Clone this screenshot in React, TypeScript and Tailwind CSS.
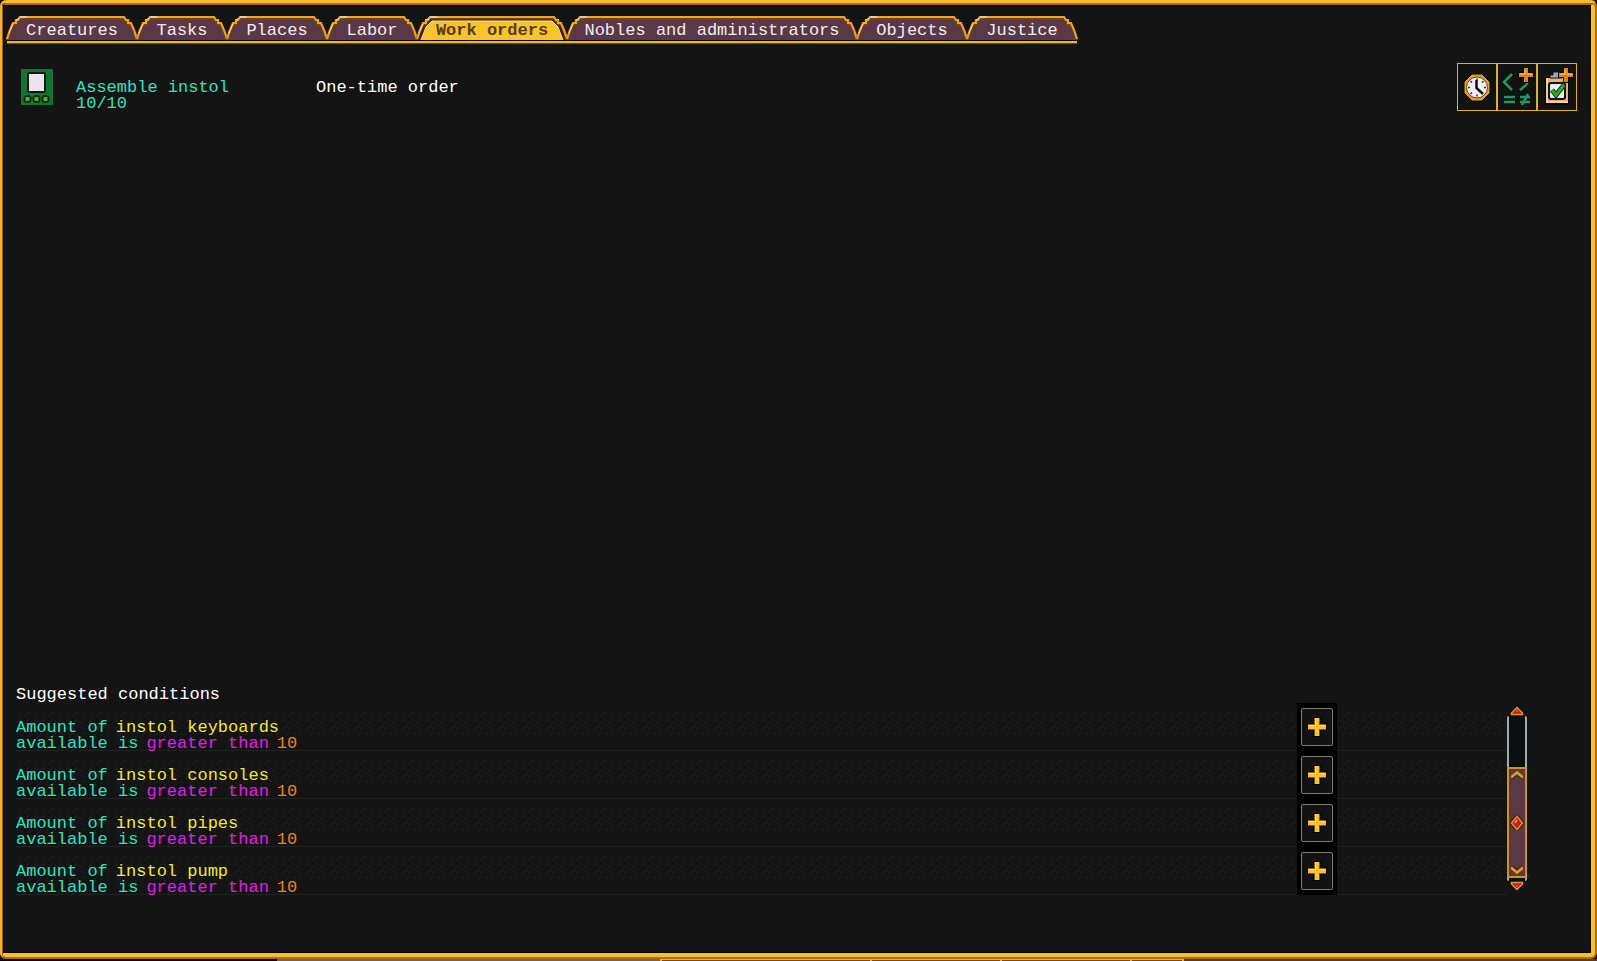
import React from "react";

type Tab = { label: string; width: string; w: number };

const TABS: Tab[] = [
  { label: "Creatures", width: "w-[130px]", w: 130 },
  { label: "Tasks", width: "w-[90px]", w: 90 },
  { label: "Places", width: "w-[100px]", w: 100 },
  { label: "Labor", width: "w-[90px]", w: 90 },
  { label: "Work orders", width: "w-[150px]", w: 150 },
  { label: "Nobles and administrators", width: "w-[290px]", w: 290 },
  { label: "Objects", width: "w-[110px]", w: 110 },
  { label: "Justice", width: "w-[110px]", w: 110 },
];

const CONDITIONS = ["instol keyboards", "instol consoles", "instol pipes", "instol pump"];

function TabShape({ w, active }: { w: number; active: boolean }) {
  const edge = `M0 23 L3 14 L6 7 H9 V4 H11 L13 1 H${w - 13} L${w - 11} 4 H${w - 9} V7 H${w - 6} L${w - 3} 14 L${w} 23`;
  const inner = `M4 24 L9 11 L12 8 L15 5 H${w - 15} L${w - 12} 8 L${w - 9} 11 L${w - 4} 24`;
  return (
    <svg aria-hidden="true" className="absolute inset-0 h-full w-full overflow-visible" viewBox={`0 0 ${w} 24`}>
      <path d={`${edge} V24 H0 Z`} fill={active ? "#3a1c08" : "#5a3848"} />
      <path d={edge} transform="translate(0 1)" fill="none" stroke="#7c4408" strokeWidth="3" />
      <path d={edge} fill="none" stroke="#e8a824" strokeWidth="2" />
      <path d="M2 17L6 8M9 4L12 2" stroke="#fce0a0" strokeWidth="1" />
      {active && <path d={`${inner} Z`} fill="#f8c42c" />}
      {active && <path d={inner} fill="none" stroke="#ffe090" strokeWidth="1" />}
      <path d="M13 1h7" stroke="#e8dcd8" strokeWidth="1.4" />
      <path d={`M0 24.500H${w}`} stroke="#0c0604" />
    </svg>
  );
}

function TabBar() {
  return (
    <nav className="flex w-fit border-b-2 border-[#f0b42c] pb-px shadow-[0_1px_0_#7c4408]">
      {TABS.map((t) => {
        const active = t.label === "Work orders";
        return (
          <button
            key={t.label}
            type="button"
            aria-pressed={active}
            className={`relative h-6 shrink-0 whitespace-nowrap ${t.width} ${active ? "font-bold text-[#5a3c08]" : "text-[#f4ecf0]"}`}
          >
            <TabShape w={t.w} active={active} />
            <span className="relative block pt-1.5 leading-4">{t.label}</span>
          </button>
        );
      })}
    </nav>
  );
}

function ConsoleIcon() {
  return (
    <svg aria-hidden="true" className="mt-1.5 h-9 w-8" viewBox="0 0 32 36">
      <rect width="32" height="36" rx="1" fill="#137434" />
      <rect x="6" y="3" width="19" height="21" rx="2" fill="#0a1c10" />
      <rect x="8" y="5" width="15" height="17" fill="#ece4ec" />
      {[6.5, 15.5, 24.5].map((x) => (
        <g key={x}>
          <circle cx={x} cy="30" r="4" fill="#0a2410" />
          <rect x={x - 2} y="28" width="4" height="4" fill="#6ca418" />
        </g>
      ))}
    </svg>
  );
}

function ClockIcon() {
  return (
    <svg aria-hidden="true" className="h-11 w-full" viewBox="0 0 38 44">
      <path d="M14 9H24L32 17V28L24 36H14L6 28V17Z" fill="#e0a028" stroke="#060606" />
      <circle cx="19" cy="22.5" r="10.500" fill="#f0ecf0" stroke="#70430c" />
      <path
        d="M19 13.500v2M19 29.500v2M10 22.500h2M26 22.500h2M12.500 16l1.500 1.500M25.500 16l-1.500 1.500M12.500 29l1.500-1.500"
        stroke="#302c34"
        strokeWidth="1.5"
      />
      <path d="M18.500 15v8l6.500 6" fill="none" stroke="#101014" strokeWidth="2.5" />
    </svg>
  );
}

function PlusMark({ x, y }: { x: number; y: number }) {
  return (
    <g transform={`translate(${x} ${y})`}>
      <path d="M5 0h4v5h5v4H9v5H5V9H0V5h5z" fill="#080604" stroke="#080604" strokeWidth="2" />
      <path d="M5 0h4v5h5v4H9v5H5V9H0V5h5z" fill="#d88420" />
      <path d="M6 1v5H1M8 6h5" fill="none" stroke="#f8cc70" />
    </g>
  );
}

function CompareIcon() {
  return (
    <svg aria-hidden="true" className="h-11 w-full" viewBox="0 0 38 44">
      <g fill="none" stroke="#06150c" strokeWidth="5">
        <path d="M14 9l-8 8 8 8M31 17l-9 8M6 32h11M6 37h11M22 32h10M22 37h10" />
      </g>
      <g fill="none" stroke="#239860" strokeWidth="2.5">
        <path d="M14 9l-8 8 8 8M30 17l-2 3-6 5M6 32h11M6 37h11M22 32h10M22 37h10M30 29l-6 11" />
      </g>
      <PlusMark x={21} y={3} />
    </svg>
  );
}

function ClipboardIcon() {
  return (
    <svg aria-hidden="true" className="h-11 w-full" viewBox="0 0 38 44">
      <path d="M7 12H31V40H7Z" fill="#080604" />
      <path d="M8 13H30V38H8Z" fill="#e8b078" />
      <path d="M8 13H10V38H8ZM8 36H30V38H8Z" fill="#f4d0a0" />
      <path d="M12 13v-3h3V7h6v3h3v3z" fill="#a0a8b8" stroke="#101014" />
      <rect x="11" y="18" width="16" height="16" rx="2" fill="#e8ecf0" stroke="#101418" strokeWidth="2" />
      <path d="M14 25l4 5 8-10" fill="none" stroke="#0c3410" strokeWidth="5" />
      <path d="M14 25l4 5 8-10" fill="none" stroke="#2ca828" strokeWidth="3" />
      <PlusMark x={21} y={3} />
    </svg>
  );
}

function AddIcon() {
  return (
    <svg aria-hidden="true" className="h-5 w-5" viewBox="0 0 20 20">
      <path d="M6 0h8v6h6v8h-6v6H6v-6H0V6h6z" fill="#060402" />
      <path d="M7 1h6v6h6v6h-6v6H7v-6H1V7h6z" fill="#8c5410" />
      <path d="M8 1h4v7h7v4h-7v7H8v-7H1V8h7z" fill="#f8c42c" />
      <path d="M8 1h1v8H1V8h7zM12 8h6v1h-6z" fill="#ffec98" />
    </svg>
  );
}

function Arrow({ down = false }: { down?: boolean }) {
  return (
    <svg aria-hidden="true" className={down ? "h-2.5 w-3.5 rotate-180" : "h-2.5 w-3.5"} viewBox="0 0 14 10">
      <path d="M7 1.500L12.500 7V8.500H1.500V7Z" fill="#c41c20" stroke="#d8983c" strokeWidth="1.5" />
      <path d="M7 4v2" stroke="#f08070" />
    </svg>
  );
}

function Chevron({ down = false }: { down?: boolean }) {
  return (
    <svg aria-hidden="true" className={down ? "h-2 w-3 rotate-180" : "h-2 w-3"} viewBox="0 0 12 8">
      <path d="M0 8l6-5 6 5" fill="none" stroke="#4c2808" strokeWidth="3" />
      <path d="M0 6.500l6-5 6 5" fill="none" stroke="#e0a020" strokeWidth="2.5" />
    </svg>
  );
}

function Scrollbar() {
  return (
    <div className="flex w-5 flex-col items-center pb-1 pt-[3px]">
      <button type="button" aria-label="Scroll up" className="h-2.5">
        <Arrow />
      </button>
      <div className="flex w-5 flex-1 flex-col rounded-xs border-x-2 border-[#a0a8b4] bg-[#0c0e0f] pb-[3px] pt-[51px]">
        <div className="-mx-0.5 flex flex-1 flex-col items-center justify-between border-2 border-[#cc9418] bg-[#5a3848] py-0.5">
          <Chevron />
          <svg aria-hidden="true" className="h-4 w-3.5" viewBox="0 0 14 16">
            <path d="M7 1L13 8 7 15 1 8Z" fill="#c01c24" stroke="#4c1c08" strokeWidth="3" />
            <path d="M7 1.500L12.500 8 7 14.500 1.500 8Z" fill="#c01c24" stroke="#d8942c" strokeWidth="1.5" />
            <path d="M7 5L5 8" stroke="#f48880" strokeWidth="1.5" />
          </svg>
          <Chevron down />
        </div>
      </div>
      <button type="button" aria-label="Scroll down" className="h-2.5">
        <Arrow down />
      </button>
    </div>
  );
}

function Texture() {
  return (
    <svg aria-hidden="true" className="absolute inset-0 h-full w-full">
      <defs>
        <pattern id="weave" width="24" height="32" y="6" patternUnits="userSpaceOnUse">
          <path
            d="M1 8l5-5M9 7l4-4 3 3M18 8l4-4M0 14l4-3 4 4 5-5 4 4 6-5M2 21l4-4 4 3 4-4 5 4 4-4M5 28l4-4M13 27l3-3M20 26l2-2"
            fill="none"
            stroke="#202020"
          />
        </pattern>
      </defs>
      <rect width="100%" height="32" y="6" fill="url(#weave)" />
    </svg>
  );
}

function ConditionRow({ item }: { item: string }) {
  return (
    <li className="relative flex h-12 border-b border-[#202020]">
      <Texture />
      <div className="relative flex-1 pt-[17px]">
        <p className="flex gap-2">
          <span className="text-[#2ce4c4]">Amount of</span>
          <span className="text-[#f4e82c]">{item}</span>
        </p>
        <p className="flex gap-2">
          <span className="text-[#2ce4c4]">available is</span>
          <span className="text-[#e41cec]">greater than</span>
          <span className="text-[#f4801c]">10</span>
        </p>
      </div>
      <div className="relative -mb-px flex w-10 items-start justify-center bg-black pt-[5px]">
        <button
          type="button"
          aria-label={`Add condition for ${item}`}
          className="flex h-[38px] w-8 items-center justify-center rounded-xs border border-[#7c7c7c] bg-[#121212]"
        >
          <AddIcon />
        </button>
      </div>
      <div className="w-[170px]" />
    </li>
  );
}

function OrderRow() {
  const action = "w-10 border border-[#e0b02c] bg-[#121212] py-px";
  return (
    <section className="mt-5 flex items-start pl-[17px] pr-[13px]">
      <ConsoleIcon />
      <div className="ml-[23px] mt-[17px] w-60 text-[#2ce4c4]">
        <p>Assemble instol</p>
        <p>10/10</p>
      </div>
      <p className="mt-[17px] flex-1 text-white">One-time order</p>
      <div className="flex">
        <button type="button" aria-label="Order frequency" className={action}>
          <ClockIcon />
        </button>
        <button type="button" aria-label="Add condition" className={action}>
          <CompareIcon />
        </button>
        <button type="button" aria-label="Add order condition" className={action}>
          <ClipboardIcon />
        </button>
      </div>
    </section>
  );
}

export default function App() {
  return (
    <div className="flex h-screen flex-col bg-[#140c06] font-['Liberation_Mono',monospace] text-[17px] leading-4">
      <main className="flex min-h-0 flex-1 flex-col rounded-md border-b-2 border-l-2 border-r-2 border-t-3 border-b-[#b06c14] border-l-[#f0b42c] border-r-[#b06c14] border-t-[#f4bc2c]">
        <div className="flex min-h-0 flex-1 flex-col rounded-sm border-b-4 border-l border-r-4 border-t-2 border-b-[#f8c030] border-l-[#a86410] border-r-[#f8c030] border-t-[#b06814]">
          <div className="flex min-h-0 flex-1 flex-col border border-black bg-[#141414] pb-[57px] pt-2.5">
            <div className="pl-[3px]">
              <TabBar />
            </div>
            <OrderRow />
            <section className="mt-auto pl-3 pr-[63px]">
              <h2 className="text-white">Suggested conditions</h2>
              <div className="flex">
                <ul className="flex-1">
                  {CONDITIONS.map((c) => (
                    <ConditionRow key={c} item={c} />
                  ))}
                </ul>
                <Scrollbar />
              </div>
            </section>
          </div>
        </div>
      </main>
      <div aria-hidden="true" className="flex h-0.5 shrink-0">
        <div className="w-[277px] bg-[#0c0402]" />
        <div className="w-[383px] bg-[#6c6458]" />
        <div className="flex w-[524px] border-x-2 border-t border-[#f0b42c] bg-[#7c4c08]">
          <div className="w-[210px] border-r-2 border-[#f0b42c]" />
          <div className="w-[130px] border-r-2 border-[#f0b42c]" />
          <div className="w-[130px] border-r-2 border-[#f0b42c]" />
        </div>
        <div className="flex-1 bg-[#4c4038]" />
      </div>
    </div>
  );
}
